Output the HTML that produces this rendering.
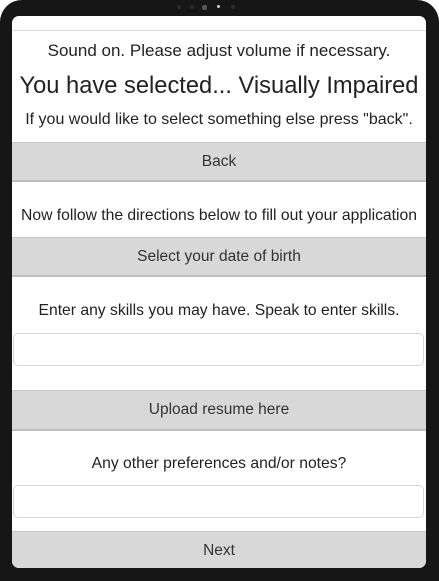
<!DOCTYPE html>
<html><head><style>
html,body{margin:0;padding:0;background:#fff;width:439px;height:581px;overflow:hidden}
.frame{position:absolute;left:0;top:0;width:439px;height:581px;background:#161616;border-radius:22px 22px 0 0}
.screen{position:absolute;left:12px;top:16px;width:414px;height:552px;background:#fff;border-radius:7px;overflow:hidden;font-family:"Liberation Sans",sans-serif;color:#222}
.t{position:absolute;left:0;width:414px;text-align:center;white-space:nowrap}
.btn{position:absolute;left:0;width:414px;background:#d8d8d8;border-top:1px solid #c8c8c8;border-bottom:2px solid #bdbdbd;text-align:center;font-size:15.5px;color:#333;box-sizing:border-box}
.inp{position:absolute;left:1px;width:411px;height:33px;border:1px solid #d6d6d6;border-radius:5px;box-sizing:border-box;background:#fff}
.dot{position:absolute;top:5px;width:4px;height:4px;border-radius:2px;background:#2a2a2a}
</style></head><body>
<div class="frame">
<div class="dot" style="left:177px"></div><div class="dot" style="left:190px"></div>
<div class="dot" style="left:202px;background:#555;width:5px;height:5px"></div>
<div class="dot" style="left:217px;background:#ccc;width:3px;height:3px"></div>
<div class="dot" style="left:231px"></div>
</div>
<div class="screen">
<div style="position:absolute;left:0;top:14px;width:414px;height:1px;background:#ddd"></div>
<div class="t" style="top:25px;font-size:17px">Sound on. Please adjust volume if necessary.</div>
<div class="t" style="top:57px;font-size:23.7px">You have selected... Visually Impaired</div>
<div class="t" style="top:95px;font-size:16px">If you would like to select something else press "back".</div>
<div class="btn" style="top:126px;height:40px;line-height:37px">Back</div>
<div class="t" style="top:191px;font-size:15.7px">Now follow the directions below to fill out your application</div>
<div class="btn" style="top:221px;height:40px;line-height:37px">Select your date of birth</div>
<div class="t" style="top:286px;font-size:15.7px">Enter any skills you may have. Speak to enter skills.</div>
<div class="inp" style="top:317px"></div>
<div class="btn" style="top:374px;height:41px;line-height:38px">Upload resume here</div>
<div class="t" style="top:439px;font-size:15.7px">Any other preferences and/or notes?</div>
<div class="inp" style="top:469px"></div>
<div class="btn" style="top:515px;height:37px;line-height:37px;border-bottom:none">Next</div>
</div>
</body></html>
